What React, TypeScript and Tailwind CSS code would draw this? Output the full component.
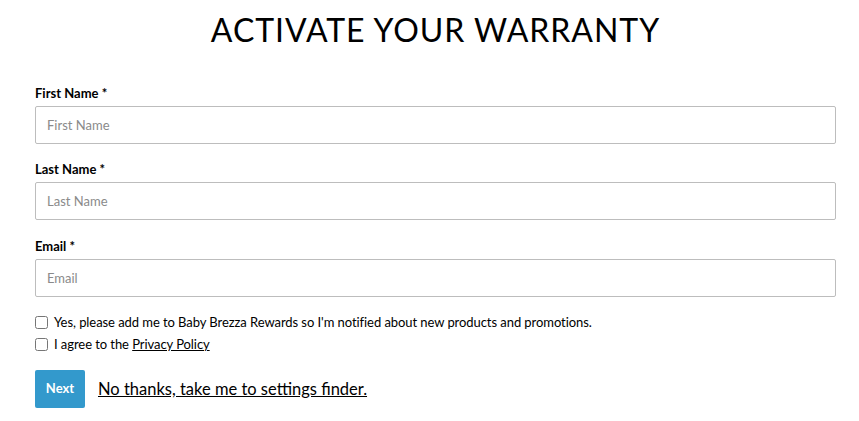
const fields = [
  { label: "First Name", placeholder: "First Name" },
  { label: "Last Name", placeholder: "Last Name" },
  { label: "Email", placeholder: "Email" },
];

export default function App() {
  return (
    <div className="min-h-[421px] bg-white px-[35px] font-['Lato','Noto_Sans',sans-serif] text-[#111]">
      <h1 className="pl-[12px] pt-[11px] text-center font-['Lato',sans-serif] text-[32px] font-normal leading-[38px] tracking-[0.03em] text-black">
        ACTIVATE YOUR WARRANTY
      </h1>

      <form className="mt-[36px] w-[801px]">
        {fields.map((f, i) => (
          <div key={f.label} className={i === 1 ? "mb-[18px]" : "mb-[17px]"}>
            <label className="block text-[13px] font-bold leading-[16px] text-black">
              {f.label} *
            </label>
            <input
              className="mt-[5px] block h-[38px] w-full rounded-[2px] border border-[#bdbdbd] px-[11px] text-[13px] text-[#555] outline-none placeholder:text-[#8a8a8a]"
              placeholder={f.placeholder}
            />
          </div>
        ))}

        <div className="flex flex-col gap-[6px] text-[13px] leading-[16px] tracking-[-0.005em] text-black">
          <label className="flex items-center gap-[6px]">
            <input type="checkbox" className="h-[13px] w-[13px]" />
            Yes, please add me to Baby Brezza Rewards so I'm notified about new products and promotions.
          </label>
          <label className="flex items-center gap-[6px]">
            <input type="checkbox" className="h-[13px] w-[13px]" />
            <span>
              I agree to the <a className="underline">Privacy Policy</a>
            </span>
          </label>
        </div>

        <div className="mt-[18px] flex items-center gap-[13px]">
          <button
            type="button"
            className="h-[38px] w-[50px] rounded-[2px] bg-[#3399cc] text-[13px] font-bold text-white"
          >
            Next
          </button>
          <a className="text-[16.5px] leading-[20px] text-black underline">
            No thanks, take me to settings finder.
          </a>
        </div>
      </form>
    </div>
  );
}
